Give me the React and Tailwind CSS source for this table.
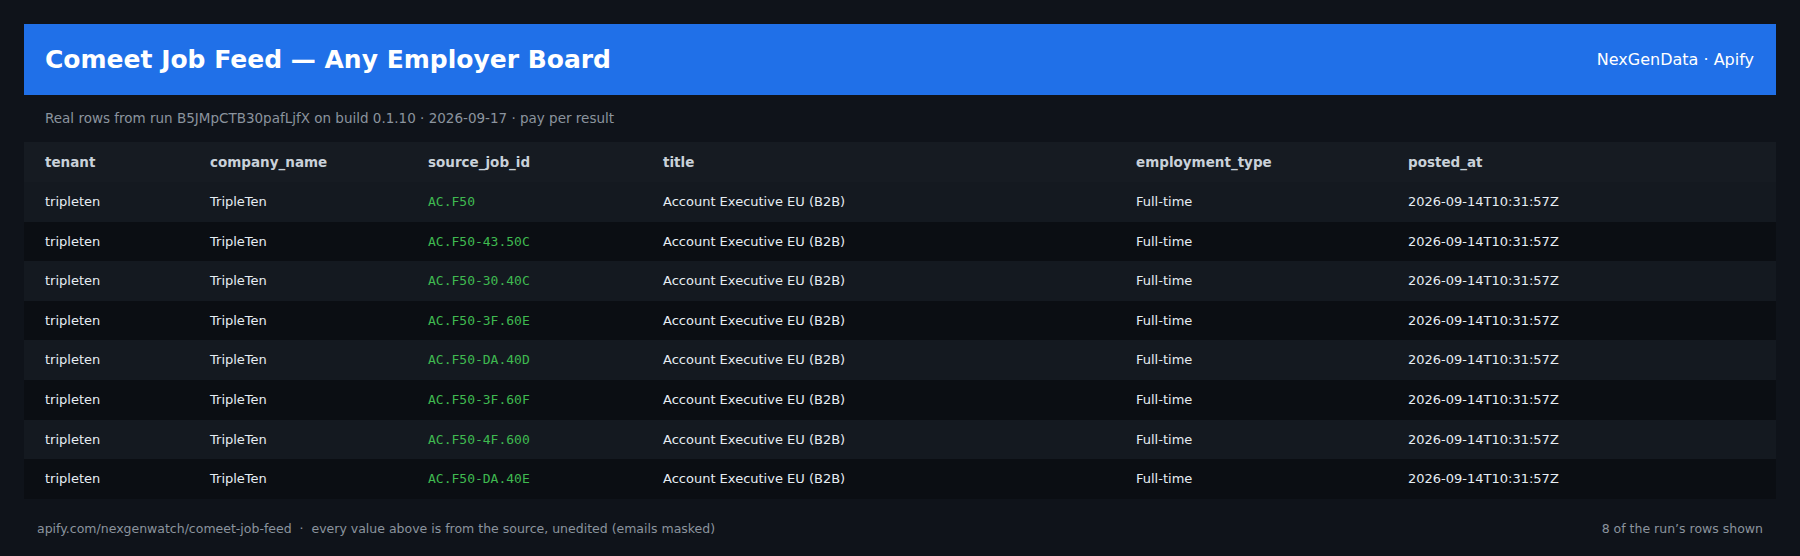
import React from "react";

const rows = [
  "AC.F50",
  "AC.F50-43.50C",
  "AC.F50-30.40C",
  "AC.F50-3F.60E",
  "AC.F50-DA.40D",
  "AC.F50-3F.60F",
  "AC.F50-4F.600",
  "AC.F50-DA.40E",
];

const cols = ["tenant", "company_name", "source_job_id", "title", "employment_type", "posted_at"];
const widths = ["w-[165px]", "w-[218px]", "w-[235px]", "w-[473px]", "w-[272px]", "w-[389px]"];

export default function App() {
  return (
    <div className="min-h-[556px] w-full bg-[#0f131a] px-6 pt-6 font-['DejaVu_Sans',sans-serif]">
      <div className="flex h-[71px] items-center justify-between bg-[#2070e8] pl-[21px] pr-[22px]">
        <h1 className="text-[25px] font-bold leading-none text-white">Comeet Job Feed — Any Employer Board</h1>
        <div className="text-[16px] text-white">NexGenData · Apify</div>
      </div>
      <div className="flex h-[47px] items-center pl-[21px] text-[13.5px] text-[#8b949e]">
        Real rows from run B5JMpCTB30pafLjfX on build 0.1.10 · 2026-09-17 · pay per result
      </div>
      <table className="w-full table-fixed border-collapse">
        <colgroup>
          {widths.map((w, i) => (
            <col key={i} className={w} />
          ))}
        </colgroup>
        <thead>
          <tr className="h-[40px] bg-[#161b22]">
            {cols.map((c) => (
              <th key={c} className="pl-[21px] text-left text-[13.5px] font-bold text-[#c9d1d9]">
                {c}
              </th>
            ))}
          </tr>
        </thead>
        <tbody>
          {rows.map((id, i) => (
            <tr key={id} className={`h-[39.6px] ${i % 2 === 0 ? "bg-[#141920]" : "bg-[#0b0e13]"}`}>
              <td className="pl-[21px] text-[13px] text-[#e6edf3]">tripleten</td>
              <td className="pl-[21px] text-[13px] text-[#e6edf3]">TripleTen</td>
              <td className="pl-[21px] font-['DejaVu_Sans_Mono',monospace] text-[13px] text-[#3fb950]">{id}</td>
              <td className="pl-[21px] text-[13px] text-[#e6edf3]">Account Executive EU (B2B)</td>
              <td className="pl-[21px] text-[13px] text-[#e6edf3]">Full-time</td>
              <td className="pl-[21px] text-[13px] text-[#e6edf3]">2026-09-14T10:31:57Z</td>
            </tr>
          ))}
        </tbody>
      </table>
      <div className="flex h-[56px] items-center justify-between px-[13px] pt-[6px] text-[12.5px] text-[#8b949e]">
        <span>apify.com/nexgenwatch/comeet-job-feed &nbsp;·&nbsp; every value above is from the source, unedited (emails masked)</span>
        <span>8 of the run’s rows shown</span>
      </div>
    </div>
  );
}
